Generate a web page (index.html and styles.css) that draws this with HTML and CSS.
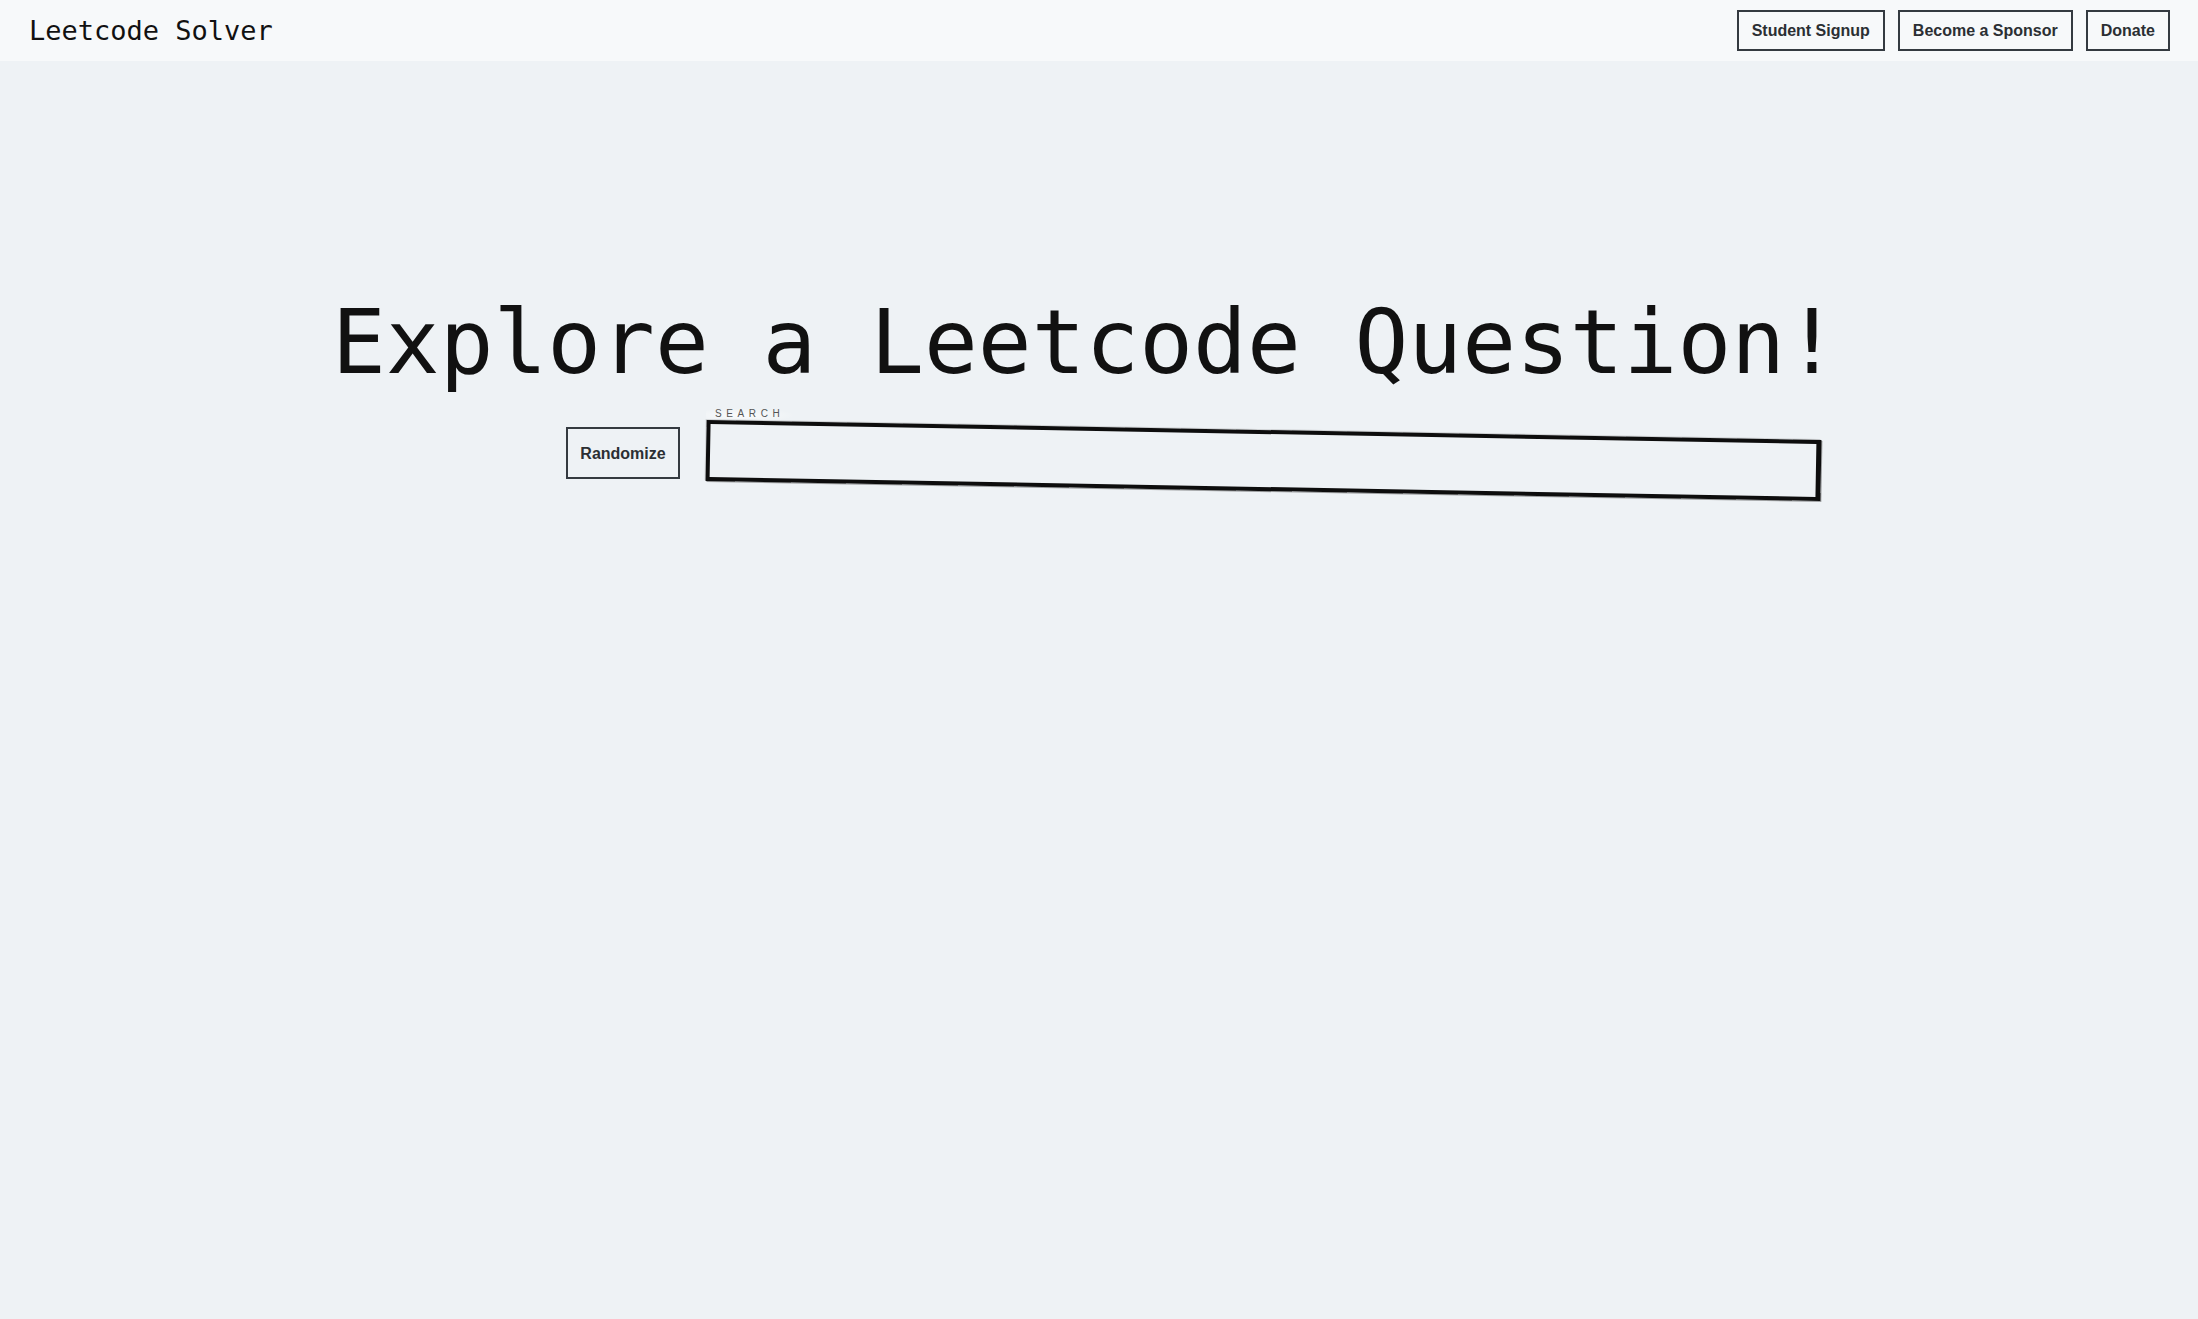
FILE: index.html
```html
<!DOCTYPE html>
<html lang="en">
<head>
<meta charset="utf-8">
<title>Leetcode Solver</title>
<link rel="stylesheet" href="styles.css">
</head>
<body>
<header class="topbar">
  <div class="brand">Leetcode Solver</div>
  <nav class="actions">
    <button class="btn">Student Signup</button>
    <button class="btn">Become a Sponsor</button>
    <button class="btn">Donate</button>
  </nav>
</header>
<main class="hero">
  <h1 class="title">Explore a Leetcode Question!</h1>
  <div class="tools">
    <button class="btn btn-lg">Randomize</button>
    <div class="search">
      <label class="search-label" for="q">SEARCH</label>
      <input id="q" class="search-input" type="text">
    </div>
  </div>
</main>
</body>
</html>
```

FILE: styles.css
```css
* { box-sizing: border-box; }
html, body { margin: 0; padding: 0; }
body {
  background: #eef2f5;
  min-height: 1319px;
  font-family: "Liberation Sans", Arial, sans-serif;
  color: #111;
}
.topbar {
  height: 61px;
  background: #f7f9fa;
  display: flex;
  align-items: center;
  justify-content: space-between;
  padding: 0 28px 0 29px;
}
.brand {
  font-family: "DejaVu Sans Mono", "Liberation Mono", monospace;
  font-size: 27px;
  color: #111;
  line-height: 1;
  padding-top: 0;
}
.actions {
  display: flex;
  gap: 13px;
}
.btn {
  font-family: "Liberation Sans", Arial, sans-serif;
  font-weight: 700;
  font-size: 16px;
  line-height: 23px;
  color: #2b2f33;
  background: transparent;
  border: 2px solid #343a40;
  border-radius: 0;
  padding: 7px 13px;
  cursor: pointer;
}
.hero {
  width: 1526px;
  margin: 0 auto;
  padding-top: 237px;
}
.title {
  margin: 0 0 0 -4px;
  font-family: "DejaVu Sans Mono", "Liberation Mono", monospace;
  font-weight: 400;
  font-size: 89.4px;
  line-height: 89px;
  color: #111;
  white-space: nowrap;
}
.tools {
  display: flex;
  align-items: flex-start;
  gap: 26px;
  margin-top: 21px;
  padding-left: 230px;
}
.btn-lg {
  margin-top: 19px;
  width: 114px;
  height: 52px;
  padding: 13px 12px 11px;
  line-height: 24px;
}
.search {
  display: flex;
  flex-direction: column;
  position: relative;
}
.search-label {
  font-size: 10px;
  line-height: 12px;
  letter-spacing: 4.6px;
  color: #555;
  padding-left: 9px;
  background: radial-gradient(ellipse at 40% 60%, rgba(255,255,255,0.7), rgba(255,255,255,0) 70%);
  width: 90px;
}
.search-input {
  margin-top: 10px;
  width: 1115px;
  height: 61px;
  border: 4px solid #0d0d0d;
  border-right-width: 5px;
  background: transparent;
  outline: none;
  transform: rotate(1.03deg);
  box-shadow: 1px 1px 0 rgba(60,60,60,0.45), -1px -1px 0 rgba(120,120,120,0.25);
  font-size: 18px;
  padding: 0 12px;
}
```
